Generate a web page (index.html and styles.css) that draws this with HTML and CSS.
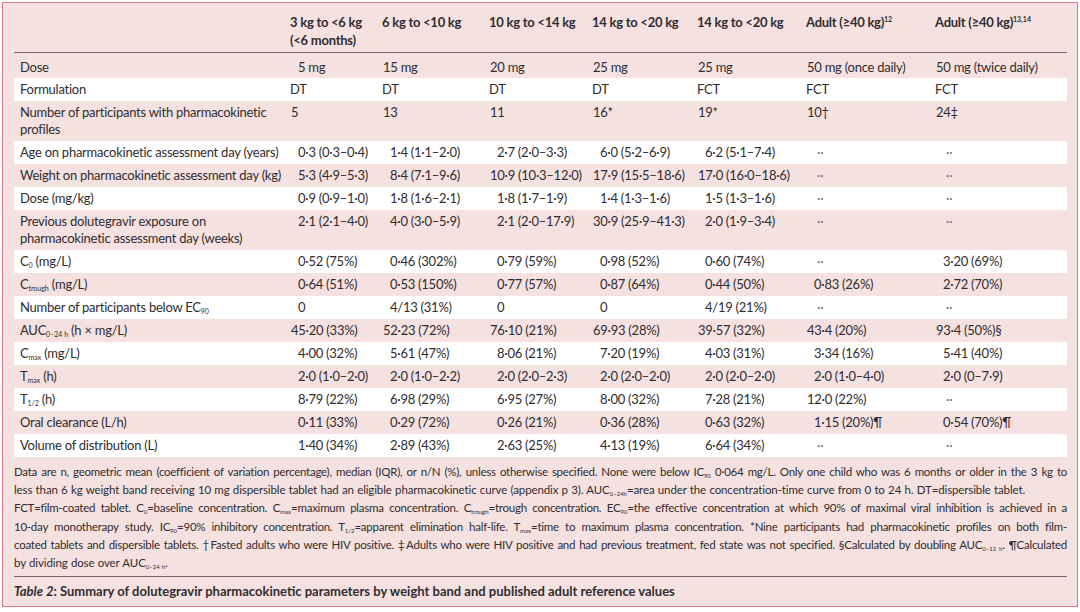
FILE: index.html
```html
<!DOCTYPE html>
<html lang="en">
<head>
<meta charset="utf-8">
<title>Table 2</title>
<link rel="stylesheet" href="styles.css">
</head>
<body>
<div class="card">
  <table class="pk">
    <colgroup>
      <col class="w-lab"><col class="w1"><col class="w2"><col class="w3"><col class="w4"><col class="w5"><col class="w6"><col class="w7">
    </colgroup>
    <thead>
      <tr>
        <th></th>
        <th>3 kg to &lt;6 kg<br>(&lt;6 months)</th>
        <th>6 kg to &lt;10 kg</th>
        <th>10 kg to &lt;14 kg</th>
        <th>14 kg to &lt;20 kg</th>
        <th>14 kg to &lt;20 kg</th>
        <th>Adult (≥40 kg)<sup>12</sup></th>
        <th>Adult (≥40 kg)<sup>13,14</sup></th>
      </tr>
    </thead>
    <tbody>
      <tr>
        <td>Dose</td><td class="a">5 mg</td><td class="t">15 mg</td><td class="t">20 mg</td><td class="t">25 mg</td><td class="t">25 mg</td><td class="t">50 mg (once daily)</td><td class="t">50 mg (twice daily)</td>
      </tr>
      <tr>
        <td>Formulation</td><td>DT</td><td>DT</td><td>DT</td><td>DT</td><td>FCT</td><td>FCT</td><td>FCT</td>
      </tr>
      <tr>
        <td>Number of participants with pharmacokinetic<br>profiles</td><td class="t">5</td><td class="t">13</td><td class="t">11</td><td class="t">16*</td><td class="t">19*</td><td class="t">10†</td><td class="t">24‡</td>
      </tr>
      <tr>
        <td>Age on pharmacokinetic assessment day (years)</td><td class="a">0·3 (0·3–0·4)</td><td class="a">1·4 (1·1–2·0)</td><td class="a">2·7 (2·0–3·3)</td><td class="a">6·0 (5·2–6·9)</td><td class="a">6·2 (5·1–7·4)</td><td class="dots">··</td><td class="dots">··</td>
      </tr>
      <tr>
        <td>Weight on pharmacokinetic assessment day (kg)</td><td class="a">5·3 (4·9–5·3)</td><td class="a">8·4 (7·1–9·6)</td><td class="b">10·9 (10·3–12·0)</td><td class="b">17·9 (15·5–18·6)</td><td class="b">17·0 (16·0–18·6)</td><td class="dots">··</td><td class="dots">··</td>
      </tr>
      <tr>
        <td>Dose (mg/kg)</td><td class="a">0·9 (0·9–1·0)</td><td class="a">1·8 (1·6–2·1)</td><td class="a">1·8 (1·7–1·9)</td><td class="a">1·4 (1·3–1·6)</td><td class="a">1·5 (1·3–1·6)</td><td class="dots">··</td><td class="dots">··</td>
      </tr>
      <tr>
        <td>Previous dolutegravir exposure on<br>pharmacokinetic assessment day (weeks)</td><td class="a">2·1 (2·1–4·0)</td><td class="a">4·0 (3·0–5·9)</td><td class="a">2·1 (2·0–17·9)</td><td class="b">30·9 (25·9–41·3)</td><td class="a">2·0 (1·9–3·4)</td><td class="dots">··</td><td class="dots">··</td>
      </tr>
      <tr>
        <td>C<sub>0</sub> (mg/L)</td><td class="a">0·52 (75%)</td><td class="a">0·46 (302%)</td><td class="a">0·79 (59%)</td><td class="a">0·98 (52%)</td><td class="a">0·60 (74%)</td><td class="dots">··</td><td class="a">3·20 (69%)</td>
      </tr>
      <tr>
        <td>C<sub>trough</sub> (mg/L)</td><td class="a">0·64 (51%)</td><td class="a">0·53 (150%)</td><td class="a">0·77 (57%)</td><td class="a">0·87 (64%)</td><td class="a">0·44 (50%)</td><td class="a">0·83 (26%)</td><td class="a">2·72 (70%)</td>
      </tr>
      <tr>
        <td>Number of participants below EC<sub>90</sub></td><td class="a">0</td><td class="a">4/13 (31%)</td><td class="a">0</td><td class="a">0</td><td class="a">4/19 (21%)</td><td class="dots">··</td><td class="dots">··</td>
      </tr>
      <tr>
        <td>AUC<sub>0–24 h</sub> (h × mg/L)</td><td class="b">45·20 (33%)</td><td class="b">52·23 (72%)</td><td class="b">76·10 (21%)</td><td class="b">69·93 (28%)</td><td class="b">39·57 (32%)</td><td class="b">43·4 (20%)</td><td class="b">93·4 (50%)§</td>
      </tr>
      <tr>
        <td>C<sub>max</sub> (mg/L)</td><td class="a">4·00 (32%)</td><td class="a">5·61 (47%)</td><td class="a">8·06 (21%)</td><td class="a">7·20 (19%)</td><td class="a">4·03 (31%)</td><td class="a">3·34 (16%)</td><td class="a">5·41 (40%)</td>
      </tr>
      <tr>
        <td>T<sub>max</sub> (h)</td><td class="a">2·0 (1·0–2·0)</td><td class="a">2·0 (1·0–2·2)</td><td class="a">2·0 (2·0–2·3)</td><td class="a">2·0 (2·0–2·0)</td><td class="a">2·0 (2·0–2·0)</td><td class="a">2·0 (1·0–4·0)</td><td class="a">2·0 (0–7·9)</td>
      </tr>
      <tr>
        <td>T<sub>1/2</sub> (h)</td><td class="a">8·79 (22%)</td><td class="a">6·98 (29%)</td><td class="a">6·95 (27%)</td><td class="a">8·00 (32%)</td><td class="a">7·28 (21%)</td><td class="b">12·0 (22%)</td><td class="dots">··</td>
      </tr>
      <tr>
        <td>Oral clearance (L/h)</td><td class="a">0·11 (33%)</td><td class="a">0·29 (72%)</td><td class="a">0·26 (21%)</td><td class="a">0·36 (28%)</td><td class="a">0·63 (32%)</td><td class="a">1·15 (20%)¶</td><td class="a">0·54 (70%)¶</td>
      </tr>
      <tr>
        <td>Volume of distribution (L)</td><td class="a">1·40 (34%)</td><td class="a">2·89 (43%)</td><td class="a">2·63 (25%)</td><td class="a">4·13 (19%)</td><td class="a">6·64 (34%)</td><td class="dots">··</td><td class="dots">··</td>
      </tr>
    </tbody>
  </table>

  <div class="notes">
    <span class="ln">Data are n, geometric mean (coefficient of variation percentage), median (IQR), or n/N (%), unless otherwise specified. None were below IC<sub>90</sub> 0·064 mg/L. Only one child who was 6 months or older in the 3 kg to</span>
    <span class="ln short">less than 6 kg weight band receiving 10 mg dispersible tablet had an eligible pharmacokinetic curve (appendix p 3). AUC<sub>0–24h</sub>=area under the concentration-time curve from 0 to 24 h. DT=dispersible tablet.</span>
    <span class="ln">FCT=film-coated tablet. C<sub>0</sub>=baseline concentration. C<sub>max</sub>=maximum plasma concentration. C<sub>trough</sub>=trough concentration. EC<sub>90</sub>=the effective concentration at which 90% of maximal viral inhibition is achieved in a</span>
    <span class="ln">10-day monotherapy study. IC<sub>90</sub>=90% inhibitory concentration. T<sub>1/2</sub>=apparent elimination half-life. T<sub>max</sub>=time to maximum plasma concentration. *Nine participants had pharmacokinetic profiles on both film-</span>
    <span class="ln">coated tablets and dispersible tablets. †Fasted adults who were HIV positive. ‡Adults who were HIV positive and had previous treatment, fed state was not specified. §Calculated by doubling AUC<sub>0–12 h</sub>. ¶Calculated</span>
    <span class="ln short">by dividing dose over AUC<sub>0–24 h</sub>.</span>
  </div>

  <div class="caption"><em>Table 2</em>: Summary of dolutegravir pharmacokinetic parameters by weight band and published adult reference values</div>
</div>
</body>
</html>
```

FILE: styles.css
```css
html, body {
  margin: 0;
  padding: 0;
  background: #ffffff;
}

body {
  width: 1080px;
  height: 612px;
  overflow: hidden;
  font-family: Lato, "Liberation Sans", sans-serif;
  color: #302d30;
}

.card {
  box-sizing: border-box;
  margin: 2px 0 0 2px;
  width: 1076px;
  height: 605px;
  border: 1px solid #de7592;
  background: #f5e1df;
  padding: 10px 10px 0 11px;
}

.pk {
  width: 1053px;
  table-layout: fixed;
  border-collapse: collapse;
  border-spacing: 0;
  font-size: 13px;
  letter-spacing: -0.25px;
}

.w-lab { width: 270px; }
.w1 { width: 92px; }
.w2 { width: 107px; }
.w3 { width: 103px; }
.w4 { width: 105px; }
.w5 { width: 109px; }
.w6 { width: 129px; }
.w7 { width: 138px; }

.pk th {
  text-align: left;
  font-weight: 700;
  vertical-align: top;
  line-height: 18px;
  padding: 0 0 3px 6px;
  border-bottom: 1px solid #6f6668;
  white-space: nowrap;
}

.pk td {
  text-align: left;
  vertical-align: top;
  line-height: 17px;
  padding: 3px 0 3px 6px;
  white-space: nowrap;
}

.pk tbody tr:first-child td {
  padding-top: 6px;
  padding-bottom: 2px;
}

.pk tbody tr:nth-child(even) td {
  background: #ffffff;
}

.pk td.t { padding-left: 7px; }
.pk td.a { padding-left: 14px; }
.pk td.b { padding-left: 7px; }
.pk td.dots { padding-left: 17px; color: #777; }

sub {
  font-size: 7px;
  line-height: 0;
  vertical-align: -2px;
  letter-spacing: 0;
}

sup {
  font-size: 7px;
  line-height: 0;
  vertical-align: 5px;
  letter-spacing: 0;
}

.notes {
  margin-top: 6px;
  padding-bottom: 4px;
  border-bottom: 1px solid #6f6668;
  font-size: 11.5px;
  line-height: 18.2px;
  letter-spacing: -0.25px;
  word-spacing: -0.5px;
}

.notes .ln {
  display: block;
  text-align: justify;
  text-align-last: justify;
}

.notes .ln.short {
  text-align-last: left;
  letter-spacing: -0.12px;
  word-spacing: 0.5px;
}

.notes sub {
  font-size: 6px;
}

.caption {
  padding-top: 5px;
  font-size: 13px;
  line-height: 18px;
  font-weight: 700;
  letter-spacing: 0;
}

.caption em {
  font-style: italic;
}
```
